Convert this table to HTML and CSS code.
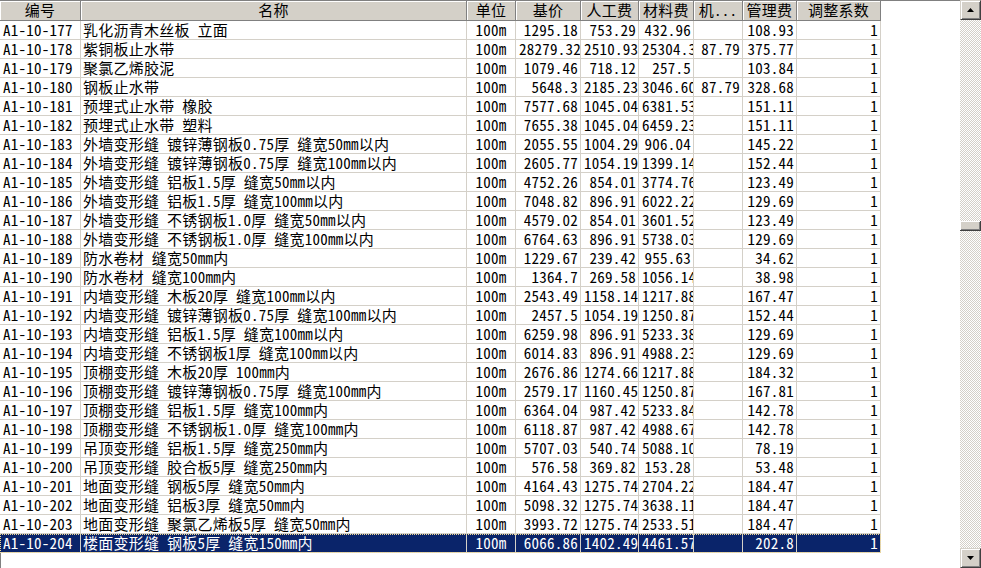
FILE: index.html
```html
<!DOCTYPE html>
<html lang="zh-CN">
<head>
<meta charset="utf-8">
<title>定额列表</title>
<link rel="stylesheet" href="styles.css">
</head>
<body>
<div class="window">
  <div class="list">
    <div class="row head">
      <div class="hc">编号</div><div class="hc">名称</div><div class="hc">单位</div><div class="hc">基价</div><div class="hc">人工费</div><div class="hc">材料费</div><div class="hc">机...</div><div class="hc">管理费</div><div class="hc">调整系数</div>
    </div>
    <div class="row"><div class="c code">A1-10-177</div><div class="c name">乳化沥青木丝板 立面</div><div class="c unit">100m</div><div class="c num">1295.18</div><div class="c num">753.29</div><div class="c num">432.96</div><div class="c num"></div><div class="c num">108.93</div><div class="c num">1</div></div>
    <div class="row"><div class="c code">A1-10-178</div><div class="c name">紫铜板止水带</div><div class="c unit">100m</div><div class="c num">28279.32</div><div class="c num">2510.93</div><div class="c num">25304.33</div><div class="c num">87.79</div><div class="c num">375.77</div><div class="c num">1</div></div>
    <div class="row"><div class="c code">A1-10-179</div><div class="c name">聚氯乙烯胶泥</div><div class="c unit">100m</div><div class="c num">1079.46</div><div class="c num">718.12</div><div class="c num">257.5</div><div class="c num"></div><div class="c num">103.84</div><div class="c num">1</div></div>
    <div class="row"><div class="c code">A1-10-180</div><div class="c name">钢板止水带</div><div class="c unit">100m</div><div class="c num">5648.3</div><div class="c num">2185.23</div><div class="c num">3046.60</div><div class="c num">87.79</div><div class="c num">328.68</div><div class="c num">1</div></div>
    <div class="row"><div class="c code">A1-10-181</div><div class="c name">预埋式止水带 橡胶</div><div class="c unit">100m</div><div class="c num">7577.68</div><div class="c num">1045.04</div><div class="c num">6381.53</div><div class="c num"></div><div class="c num">151.11</div><div class="c num">1</div></div>
    <div class="row"><div class="c code">A1-10-182</div><div class="c name">预埋式止水带 塑料</div><div class="c unit">100m</div><div class="c num">7655.38</div><div class="c num">1045.04</div><div class="c num">6459.23</div><div class="c num"></div><div class="c num">151.11</div><div class="c num">1</div></div>
    <div class="row"><div class="c code">A1-10-183</div><div class="c name">外墙变形缝 镀锌薄钢板0.75厚 缝宽50mm以内</div><div class="c unit">100m</div><div class="c num">2055.55</div><div class="c num">1004.29</div><div class="c num">906.04</div><div class="c num"></div><div class="c num">145.22</div><div class="c num">1</div></div>
    <div class="row"><div class="c code">A1-10-184</div><div class="c name">外墙变形缝 镀锌薄钢板0.75厚 缝宽100mm以内</div><div class="c unit">100m</div><div class="c num">2605.77</div><div class="c num">1054.19</div><div class="c num">1399.14</div><div class="c num"></div><div class="c num">152.44</div><div class="c num">1</div></div>
    <div class="row"><div class="c code">A1-10-185</div><div class="c name">外墙变形缝 铝板1.5厚 缝宽50mm以内</div><div class="c unit">100m</div><div class="c num">4752.26</div><div class="c num">854.01</div><div class="c num">3774.76</div><div class="c num"></div><div class="c num">123.49</div><div class="c num">1</div></div>
    <div class="row"><div class="c code">A1-10-186</div><div class="c name">外墙变形缝 铝板1.5厚 缝宽100mm以内</div><div class="c unit">100m</div><div class="c num">7048.82</div><div class="c num">896.91</div><div class="c num">6022.22</div><div class="c num"></div><div class="c num">129.69</div><div class="c num">1</div></div>
    <div class="row"><div class="c code">A1-10-187</div><div class="c name">外墙变形缝 不锈钢板1.0厚 缝宽50mm以内</div><div class="c unit">100m</div><div class="c num">4579.02</div><div class="c num">854.01</div><div class="c num">3601.52</div><div class="c num"></div><div class="c num">123.49</div><div class="c num">1</div></div>
    <div class="row"><div class="c code">A1-10-188</div><div class="c name">外墙变形缝 不锈钢板1.0厚 缝宽100mm以内</div><div class="c unit">100m</div><div class="c num">6764.63</div><div class="c num">896.91</div><div class="c num">5738.03</div><div class="c num"></div><div class="c num">129.69</div><div class="c num">1</div></div>
    <div class="row"><div class="c code">A1-10-189</div><div class="c name">防水卷材 缝宽50mm内</div><div class="c unit">100m</div><div class="c num">1229.67</div><div class="c num">239.42</div><div class="c num">955.63</div><div class="c num"></div><div class="c num">34.62</div><div class="c num">1</div></div>
    <div class="row"><div class="c code">A1-10-190</div><div class="c name">防水卷材 缝宽100mm内</div><div class="c unit">100m</div><div class="c num">1364.7</div><div class="c num">269.58</div><div class="c num">1056.14</div><div class="c num"></div><div class="c num">38.98</div><div class="c num">1</div></div>
    <div class="row"><div class="c code">A1-10-191</div><div class="c name">内墙变形缝 木板20厚 缝宽100mm以内</div><div class="c unit">100m</div><div class="c num">2543.49</div><div class="c num">1158.14</div><div class="c num">1217.88</div><div class="c num"></div><div class="c num">167.47</div><div class="c num">1</div></div>
    <div class="row"><div class="c code">A1-10-192</div><div class="c name">内墙变形缝 镀锌薄钢板0.75厚 缝宽100mm以内</div><div class="c unit">100m</div><div class="c num">2457.5</div><div class="c num">1054.19</div><div class="c num">1250.87</div><div class="c num"></div><div class="c num">152.44</div><div class="c num">1</div></div>
    <div class="row"><div class="c code">A1-10-193</div><div class="c name">内墙变形缝 铝板1.5厚 缝宽100mm以内</div><div class="c unit">100m</div><div class="c num">6259.98</div><div class="c num">896.91</div><div class="c num">5233.38</div><div class="c num"></div><div class="c num">129.69</div><div class="c num">1</div></div>
    <div class="row"><div class="c code">A1-10-194</div><div class="c name">内墙变形缝 不锈钢板1厚 缝宽100mm以内</div><div class="c unit">100m</div><div class="c num">6014.83</div><div class="c num">896.91</div><div class="c num">4988.23</div><div class="c num"></div><div class="c num">129.69</div><div class="c num">1</div></div>
    <div class="row"><div class="c code">A1-10-195</div><div class="c name">顶棚变形缝 木板20厚 100mm内</div><div class="c unit">100m</div><div class="c num">2676.86</div><div class="c num">1274.66</div><div class="c num">1217.88</div><div class="c num"></div><div class="c num">184.32</div><div class="c num">1</div></div>
    <div class="row"><div class="c code">A1-10-196</div><div class="c name">顶棚变形缝 镀锌薄钢板0.75厚 缝宽100mm内</div><div class="c unit">100m</div><div class="c num">2579.17</div><div class="c num">1160.45</div><div class="c num">1250.87</div><div class="c num"></div><div class="c num">167.81</div><div class="c num">1</div></div>
    <div class="row"><div class="c code">A1-10-197</div><div class="c name">顶棚变形缝 铝板1.5厚 缝宽100mm内</div><div class="c unit">100m</div><div class="c num">6364.04</div><div class="c num">987.42</div><div class="c num">5233.84</div><div class="c num"></div><div class="c num">142.78</div><div class="c num">1</div></div>
    <div class="row"><div class="c code">A1-10-198</div><div class="c name">顶棚变形缝 不锈钢板1.0厚 缝宽100mm内</div><div class="c unit">100m</div><div class="c num">6118.87</div><div class="c num">987.42</div><div class="c num">4988.67</div><div class="c num"></div><div class="c num">142.78</div><div class="c num">1</div></div>
    <div class="row"><div class="c code">A1-10-199</div><div class="c name">吊顶变形缝 铝板1.5厚 缝宽250mm内</div><div class="c unit">100m</div><div class="c num">5707.03</div><div class="c num">540.74</div><div class="c num">5088.10</div><div class="c num"></div><div class="c num">78.19</div><div class="c num">1</div></div>
    <div class="row"><div class="c code">A1-10-200</div><div class="c name">吊顶变形缝 胶合板5厚 缝宽250mm内</div><div class="c unit">100m</div><div class="c num">576.58</div><div class="c num">369.82</div><div class="c num">153.28</div><div class="c num"></div><div class="c num">53.48</div><div class="c num">1</div></div>
    <div class="row"><div class="c code">A1-10-201</div><div class="c name">地面变形缝 钢板5厚 缝宽50mm内</div><div class="c unit">100m</div><div class="c num">4164.43</div><div class="c num">1275.74</div><div class="c num">2704.22</div><div class="c num"></div><div class="c num">184.47</div><div class="c num">1</div></div>
    <div class="row"><div class="c code">A1-10-202</div><div class="c name">地面变形缝 铝板3厚 缝宽50mm内</div><div class="c unit">100m</div><div class="c num">5098.32</div><div class="c num">1275.74</div><div class="c num">3638.11</div><div class="c num"></div><div class="c num">184.47</div><div class="c num">1</div></div>
    <div class="row"><div class="c code">A1-10-203</div><div class="c name">地面变形缝 聚氯乙烯板5厚 缝宽50mm内</div><div class="c unit">100m</div><div class="c num">3993.72</div><div class="c num">1275.74</div><div class="c num">2533.51</div><div class="c num"></div><div class="c num">184.47</div><div class="c num">1</div></div>
    <div class="row sel"><div class="c code">A1-10-204</div><div class="c name">楼面变形缝 钢板5厚 缝宽150mm内</div><div class="c unit">100m</div><div class="c num">6066.86</div><div class="c num">1402.49</div><div class="c num">4461.57</div><div class="c num"></div><div class="c num">202.8</div><div class="c num">1</div></div>
    <div class="filler"></div>
  </div>
  <div class="vscroll">
    <div class="sbtn"><svg width="7" height="4" viewBox="0 0 7 4"><path d="M3.5 0L7 4H0Z" fill="#000"/></svg></div>
    <div class="track top"></div>
    <div class="thumb"></div>
    <div class="track rest"></div>
    <div class="sbtn"><svg width="7" height="4" viewBox="0 0 7 4"><path d="M0 0H7L3.5 4Z" fill="#000"/></svg></div>
  </div>
</div>
</body>
</html>
```

FILE: styles.css
```css
* { box-sizing: border-box; }
html, body { margin: 0; padding: 0; background: #fff; }
body {
  width: 981px;
  height: 568px;
  overflow: hidden;
  font-family: "Noto Sans Mono CJK SC", "Noto Sans CJK SC", "Liberation Mono", monospace;
  font-size: 15px;
  letter-spacing: 0.25px;
  color: #000;
}
.window {
  display: flex;
  width: 981px;
  height: 568px;
}
.list {
  width: 960px;
  height: 568px;
  display: flex;
  flex-direction: column;
  border-top: 1px solid #808080;
  background: #fff;
}
.row {
  display: grid;
  grid-template-columns: 81px 386px 49px 65px 58px 55px 49px 54px 84px;
  width: 881px;
  height: 19px;
  flex: 0 0 19px;
}
.row.head {
  height: 20px;
  flex: 0 0 20px;
}
.hc {
  background: #d4d0c8;
  border-right: 1px solid #808080;
  border-bottom: 1px solid #808080;
  box-shadow: inset 1px 1px 0 #fff;
  text-align: center;
  line-height: 18px;
  white-space: nowrap;
}
.c {
  border-right: 1px solid #d4d0c8;
  border-bottom: 1px solid #d4d0c8;
  line-height: 18px;
  white-space: pre;
  padding: 0 2px;
}
.code { padding-left: 3px; }
.unit { text-align: center; }
.num {
  text-align: right;
  padding-right: 2px;
  padding-left: 3px;
  overflow-x: clip;
  overflow-y: visible;
}
.row.sel {
  background: #0a246a;
  color: #fff;
  outline: 1px dotted #f0d890;
  outline-offset: -1px;
}
.filler {
  flex: 1;
  border-left: 1px solid #808080;
  width: 1px;
}
.vscroll {
  width: 21px;
  height: 568px;
  display: flex;
  flex-direction: column;
}
.sbtn {
  flex: 0 0 20px;
  background: #d4d0c8;
  border-top: 1px solid #d4d0c8;
  border-left: 1px solid #d4d0c8;
  border-right: 1px solid #404040;
  border-bottom: 1px solid #404040;
  box-shadow: inset 1px 1px 0 #fff, inset -1px -1px 0 #808080;
  display: flex;
  align-items: center;
  justify-content: center;
}
.sbtn svg { display: block; }
.track {
  background: repeating-conic-gradient(#d4d0c8 0 25%, #fff 0 50%) 0 0 / 2px 2px;
}
.track.top { flex: 0 0 201px; }
.track.rest { flex: 1; }
.thumb {
  flex: 0 0 10px;
  background: #d4d0c8;
  border-right: 1px solid #404040;
  border-bottom: 1px solid #404040;
  box-shadow: inset 1px 1px 0 #fff, inset -1px -1px 0 #808080;
}
```
